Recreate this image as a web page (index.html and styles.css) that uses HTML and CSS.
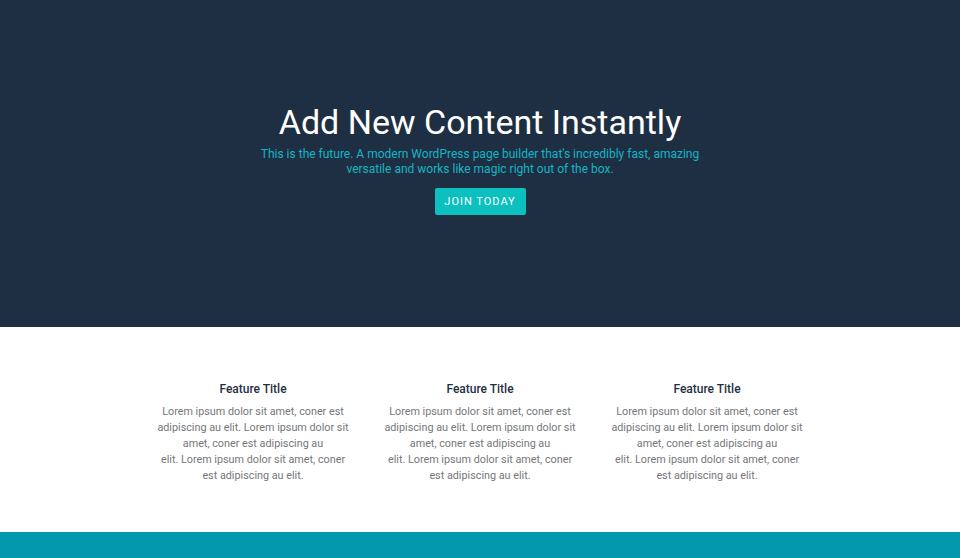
FILE: index.html
```html
<!DOCTYPE html>
<html lang="en">
<head>
<meta charset="utf-8">
<title>Add New Content Instantly</title>
<link rel="stylesheet" href="styles.css">
</head>
<body>
<section class="hero">
  <h1 class="hero-title">Add New Content Instantly</h1>
  <p class="hero-text">This is the future. A modern WordPress page builder that's incredibly fast, amazing<br>versatile and works like magic right out of the box.</p>
  <a class="hero-button" href="#">JOIN TODAY</a>
</section>
<section class="features">
  <div class="feature">
    <h2 class="feature-title">Feature Title</h2>
    <p class="feature-text">Lorem ipsum dolor sit amet, coner est<br>adipiscing au elit. Lorem ipsum dolor sit<br>amet, coner est adipiscing au<br>elit. Lorem ipsum dolor sit amet, coner<br>est adipiscing au elit.</p>
  </div>
  <div class="feature">
    <h2 class="feature-title">Feature Title</h2>
    <p class="feature-text">Lorem ipsum dolor sit amet, coner est<br>adipiscing au elit. Lorem ipsum dolor sit<br>amet, coner est adipiscing au<br>elit. Lorem ipsum dolor sit amet, coner<br>est adipiscing au elit.</p>
  </div>
  <div class="feature">
    <h2 class="feature-title">Feature Title</h2>
    <p class="feature-text">Lorem ipsum dolor sit amet, coner est<br>adipiscing au elit. Lorem ipsum dolor sit<br>amet, coner est adipiscing au<br>elit. Lorem ipsum dolor sit amet, coner<br>est adipiscing au elit.</p>
  </div>
</section>
<section class="footer-band"></section>
</body>
</html>
```
FILE: styles.css
```css
* { box-sizing: border-box; }
html, body { margin: 0; padding: 0; }
body {
  font-family: Roboto, "Liberation Sans", Arial, sans-serif;
  background: #ffffff;
}
.hero {
  height: 327px;
  background: #1f2f43;
  display: flex;
  flex-direction: column;
  align-items: center;
  padding-top: 101px;
  text-align: center;
}
.hero-title {
  margin: 0;
  font-size: 34px;
  font-weight: 400;
  line-height: 43px;
  color: #ffffff;
}
.hero-text {
  margin: 3px 0 0;
  font-size: 12px;
  line-height: 15px;
  color: #14b5c4;
}
.hero-button {
  margin-top: 11px;
  width: 91px;
  height: 27px;
  display: flex;
  align-items: center;
  justify-content: center;
  background: #0cc0c0;
  border-radius: 2px;
  color: #ffffff;
  font-size: 11px;
  font-weight: 400;
  letter-spacing: 1px;
  text-decoration: none;
}
.features {
  height: 205px;
  display: flex;
  justify-content: center;
  gap: 27px;
  padding-top: 54px;
}
.feature {
  width: 200px;
  text-align: center;
}
.feature-title {
  margin: 0;
  font-size: 12px;
  font-weight: 500;
  line-height: 16px;
  color: #1f2f43;
}
.feature-text {
  margin: 7px 0 0;
  font-size: 10.8px;
  line-height: 16px;
  color: #74777b;
}
.footer-band {
  height: 26px;
  background: #0398ae;
}
```
